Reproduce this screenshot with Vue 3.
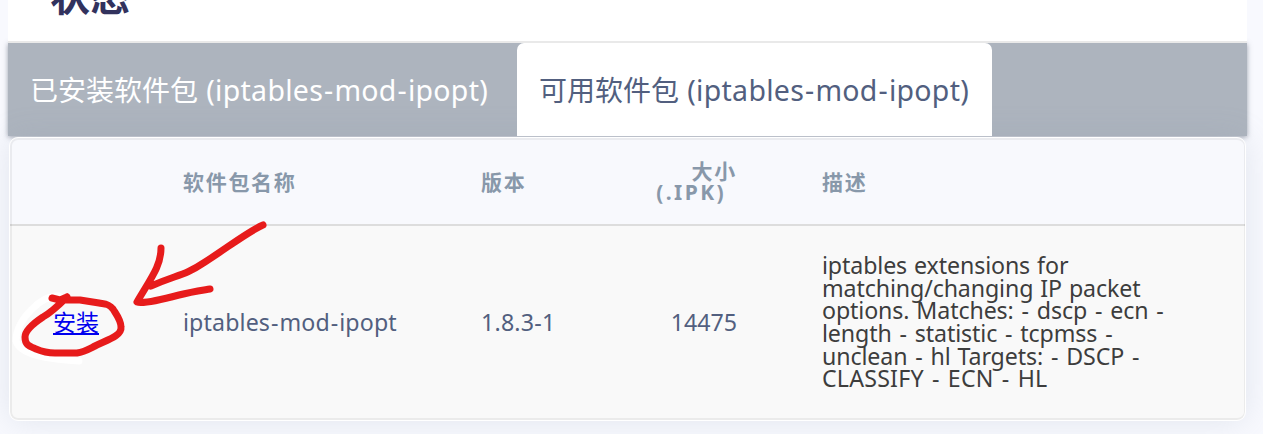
<script setup>
const tabs = [
  { label: '已安装软件包', query: '(iptables-mod-ipopt)', active: false },
  { label: '可用软件包', query: '(iptables-mod-ipopt)', active: true },
]
const description = [
  'iptables extensions for',
  'matching/changing IP packet',
  'options. Matches: - dscp - ecn -',
  'length - statistic - tcpmss -',
  'unclean - hl Targets: - DSCP -',
  'CLASSIFY - ECN - HL',
]
// Hyphens become separate pieces so that they can carry their own side bearings.
const pieces = (text) => text.split(/(-)/).filter(Boolean)
</script>

<template>
  <div class="page">
    <div class="panel">
      <h2 class="title"><span>状态</span></h2>
      <nav class="tabs">
        <a v-for="t in tabs" :key="t.label" class="tab" :class="{ active: t.active }"
          >{{ t.label }} <span class="latin"><span v-for="(p, i) in pieces(t.query)" :key="i" :class="{ dash: p === '-' }">{{ p }}</span></span></a>
      </nav>
      <div class="table">
        <div class="row head">
          <div></div>
          <div>软件包名称</div>
          <div>版本</div>
          <div class="size">大小<br /><span class="ipk">(.IPK)</span></div>
          <div>描述</div>
        </div>
        <div class="row body">
          <div><a class="install" href="#">安装</a></div>
          <div class="name"><span v-for="(p, i) in pieces('iptables-mod-ipopt')" :key="i" :class="{ dash: p === '-' }">{{ p }}</span></div>
          <div class="version">1.8.3-1</div>
          <div class="size">14475</div>
          <div class="desc">
            <div v-for="l in description" :key="l"><span v-for="(p, i) in pieces(l)" :key="i" :class="{ dash: p === '-' }">{{ p }}</span></div>
          </div>
        </div>
      </div>
    </div>
    <svg class="ink" width="300" height="434" viewBox="0 0 300 434">
      <path class="halo" d="M59 296C42 294 16 320 16 341C20 355 48 359 79 361" />
      <path d="M52 298L60 300L67 297M67 297C60 304 52 312 43 317C34 323 25 330 25 337C25 345 29 346 36 349C43 352 49 353 55 353H77C84 352 89 349 95 346C107 340 122 336 121 327C121 320 116 314 113 309C108 303 104 304 99 303L80 300H60" />
      <path d="M263 225C249 231 227 248 205 262C184 276 179 274 151 286M161 248C161 266 151 278 137 302C143 304 164 299 179 295C191 292 198 291 210 289" />
    </svg>
  </div>
</template>

<style>
body { overflow: hidden; background: #f8f9fe; }
</style>

<style scoped>
.page {
  position: relative;
  width: 1263px;
  height: 434px;
  overflow: hidden;
  background: #f8f9fe;
  color: #525f7f;
  font-family: "Noto Sans", "Noto Sans CJK SC", sans-serif;
}
.panel {
  box-sizing: border-box;
  width: 1239px;
  height: 421px;
  margin-left: 8px;
}
.title {
  position: relative;
  z-index: 1;
  display: flex;
  align-items: flex-start;
  box-sizing: border-box;
  height: 43px;
  margin: 0;
  padding-left: 42px;
  background: #fff;
  border-bottom: 2px solid #e9e9e9;
  color: #32325d;
  font: 700 40px/40px "Noto Sans CJK SC", sans-serif;
}
.title span { margin-top: -26px; }
.tabs {
  display: flex;
  height: 93px;
  background: #adb4be;
  box-shadow: 0 1px 5px rgba(60, 70, 90, .5);
}
.tab {
  box-sizing: border-box;
  width: 509px;
  padding-left: 22px;
  color: #fff;
  font-size: 28px;
  line-height: 95px;
  white-space: nowrap;
}
.tab.active {
  position: relative;
  z-index: 1;
  width: 475px;
  background: #fff;
  color: #525f7f;
  border-radius: 7px 7px 0 0;
}
.latin { font-size: 28.5px; letter-spacing: .28px; margin-left: 1px; }
.dash { margin: 0 .9px; }
.table {
  position: relative;
  box-sizing: border-box;
  width: 1237px;
  height: 284px;
  margin: 1px 0 0 1px;
  border: 1px solid #fff;
  border-radius: 9px;
  overflow: hidden;
  background: #f9f9f9;
  box-shadow: 0 0 32px rgba(136, 152, 170, .2);
  font-size: 23.2px;
}
.table::after {
  position: absolute;
  inset: 0;
  border: 2px solid rgba(0, 0, 0, .055);
  border-right-width: 1px;
  border-radius: 8px;
  content: "";
  pointer-events: none;
}
.row {
  display: grid;
  grid-template-columns: 130px 298px 183px 158px 400px;
  align-items: center;
  padding-left: 43px;
  line-height: 22.6px;
}
.head {
  box-sizing: border-box;
  height: 88px;
  padding-top: 2px;
  border-bottom: 2px solid #ddd;
  background: #f8f9fd;
  color: #8898aa;
  font-size: 21px;
  font-weight: 700;
  letter-spacing: 1.7px;
  line-height: 21px;
}
.body { height: 192px; }
.install { color: #0000ee; font-size: 23px; }
.name { letter-spacing: .13px; }
.version { letter-spacing: .2px; }
.size { width: 73px; text-align: right; justify-self: end; margin-right: 85px; }
.ipk { margin-right: 11px; letter-spacing: 2.4px; white-space: nowrap; }
.head .size { width: 90px; }
.desc { color: #3d3d3d; letter-spacing: -.12px; word-spacing: 1.1px; white-space: nowrap; }
.desc div:last-child { letter-spacing: .2px; }
.ink { position: absolute; top: 0; left: 0; fill: none; }
.ink path {
  stroke: #e71b1b;
  stroke-width: 7;
  stroke-linecap: round;
  stroke-linejoin: round;
}
.ink .halo { stroke: #fff; }
</style>
